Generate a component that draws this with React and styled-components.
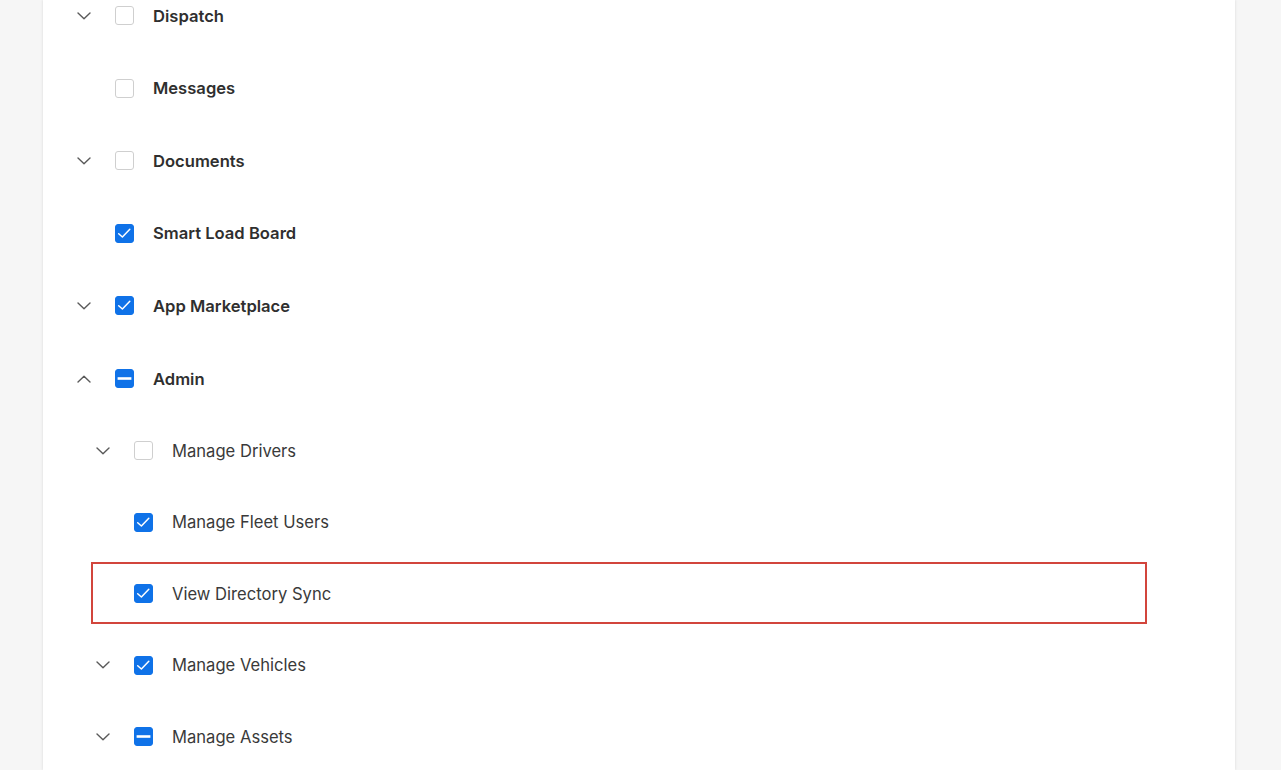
import styled, { createGlobalStyle } from "styled-components";

const GlobalStyle = createGlobalStyle`
  html, body {
    margin: 0;
    padding: 0;
    background: #f6f6f6;
    font-family: Inter, "Noto Sans", sans-serif;
    color: #333333;
    overflow: hidden;
  }
`;

const Page = styled.div`
  height: 770px;
  display: flex;
  padding-left: 43px;
  padding-right: 46px;
  overflow: hidden;
`;

const Panel = styled.div`
  flex: 1;
  background: #ffffff;
  box-shadow: -1px 0 2px rgba(0, 0, 0, 0.06), 1px 0 2px rgba(0, 0, 0, 0.06);
  padding-left: 24px;
  overflow: hidden;
`;

const List = styled.div`
  margin-top: -20.7px;
  display: flex;
  flex-direction: column;
`;

const Row = styled.div`
  position: relative;
  display: flex;
  align-items: center;
  height: ${(p) => (p.level === 0 ? "72.6px" : "71.5px")};
  padding-left: ${(p) => p.level * 19}px;

  ${(p) =>
    p.highlight &&
    `
    &::after {
      content: "";
      position: absolute;
      left: 24px;
      top: 4.5px;
      width: 1056px;
      height: 62px;
      box-sizing: border-box;
      border: 2px solid #d2453c;
      pointer-events: none;
    }
  `}
`;

const Toggle = styled.span`
  width: 34px;
  height: 20px;
  display: flex;
  align-items: center;
  justify-content: center;
  color: #5a5a5a;
  flex-shrink: 0;
`;

const Box = styled.span`
  margin-left: 14px;
  width: 19px;
  height: 19px;
  box-sizing: border-box;
  border-radius: 3px;
  flex-shrink: 0;
  display: flex;
  align-items: center;
  justify-content: center;
  background: ${(p) => (p.state === "off" ? "#ffffff" : "#0f72e8")};
  border: 1px solid ${(p) => (p.state === "off" ? "#cfcfcf" : "#0f72e8")};
`;

const Label = styled.span`
  margin-left: 19px;
  font-size: 16.6px;
  font-weight: ${(p) => (p.level === 0 ? 600 : 400)};
  color: ${(p) => (p.level === 0 ? "#2f2f2f" : "#3a3a3a")};
  white-space: nowrap;
`;

function Chevron({ up }) {
  return (
    <svg width="14" height="8" viewBox="0 0 14 8" fill="none">
      <polyline
        points={up ? "1,7 7,1.2 13,7" : "1,1 7,6.8 13,1"}
        stroke="currentColor"
        strokeWidth="1.4"
        strokeLinecap="round"
        strokeLinejoin="round"
      />
    </svg>
  );
}

function Mark({ state }) {
  if (state === "on") {
    return (
      <svg width="17" height="17" viewBox="0 0 17 17" fill="none">
        <polyline
          points="2.7,8.7 6.4,12 13.8,4.2"
          stroke="#ffffff"
          strokeWidth="1.5"
          strokeLinecap="round"
          strokeLinejoin="round"
        />
      </svg>
    );
  }
  if (state === "mixed") {
    return (
      <svg width="17" height="17" viewBox="0 0 17 17" fill="none">
        <line x1="1.6" y1="8.5" x2="15.4" y2="8.5" stroke="#ffffff" strokeWidth="2.6" />
      </svg>
    );
  }
  return null;
}

const items = [
  { label: "Dispatch", level: 0, toggle: "down", state: "off" },
  { label: "Messages", level: 0, state: "off" },
  { label: "Documents", level: 0, toggle: "down", state: "off" },
  { label: "Smart Load Board", level: 0, state: "on" },
  { label: "App Marketplace", level: 0, toggle: "down", state: "on" },
  { label: "Admin", level: 0, toggle: "up", state: "mixed" },
  { label: "Manage Drivers", level: 1, toggle: "down", state: "off" },
  { label: "Manage Fleet Users", level: 1, state: "on" },
  { label: "View Directory Sync", level: 1, state: "on", highlight: true },
  { label: "Manage Vehicles", level: 1, toggle: "down", state: "on" },
  { label: "Manage Assets", level: 1, toggle: "down", state: "mixed" },
];

export default function App() {
  return (
    <>
      <GlobalStyle />
      <Page>
        <Panel>
          <List>
            {items.map((item) => (
              <Row key={item.label} level={item.level} highlight={item.highlight}>
                <Toggle>{item.toggle && <Chevron up={item.toggle === "up"} />}</Toggle>
                <Box state={item.state}>
                  <Mark state={item.state} />
                </Box>
                <Label level={item.level}>{item.label}</Label>
              </Row>
            ))}
          </List>
        </Panel>
      </Page>
    </>
  );
}
